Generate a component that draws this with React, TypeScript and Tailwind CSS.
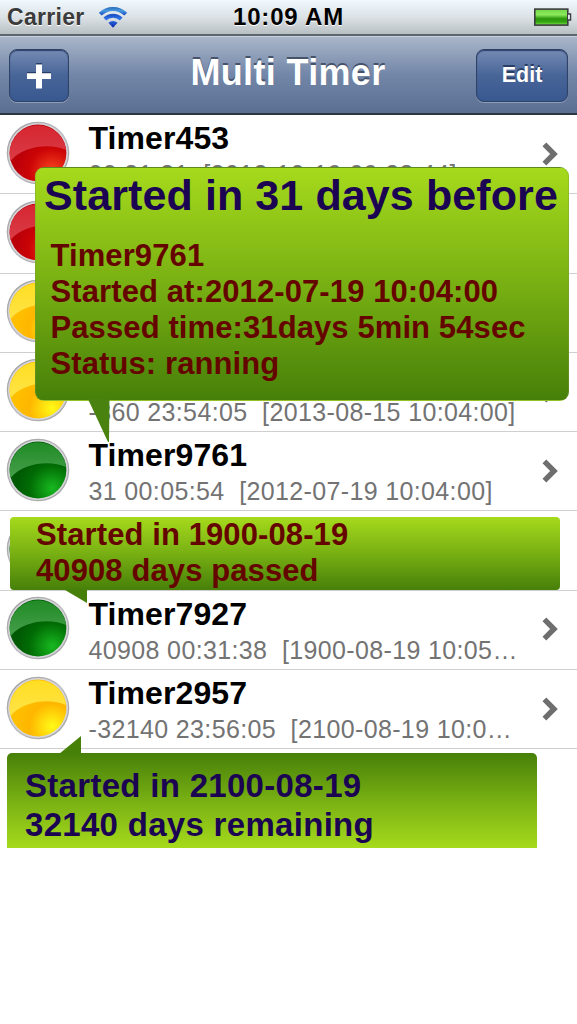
import { useId } from 'react';
import type { ReactNode } from 'react';

type Status = 'red' | 'yellow' | 'green';

interface Timer {
  id: number;
  name?: string;
  detail?: string;
  status: Status;
}

// rows without a name sit completely behind a callout
const timers: Timer[] = [
  { id: 1, name: 'Timer453', detail: '00:31:31  [2012-10-19 09:38:44]', status: 'red' },
  { id: 2, status: 'red' },
  { id: 3, status: 'yellow' },
  { id: 4, detail: '-360 23:54:05  [2013-08-15 10:04:00]', status: 'yellow' },
  { id: 5, name: 'Timer9761', detail: '31 00:05:54  [2012-07-19 10:04:00]', status: 'green' },
  { id: 6, status: 'green' },
  { id: 7, name: 'Timer7927', detail: '40908 00:31:38  [1900-08-19 10:05…', status: 'green' },
  { id: 8, name: 'Timer2957', detail: '-32140 23:56:05  [2100-08-19 10:0…', status: 'yellow' },
];

const orbColors = {
  red: { top: '#d31824', glow: '#f84420', base: '#cc0406', edge: '#bc0008', gloss: 0.16 },
  yellow: { top: '#ffdc14', glow: '#fffb18', base: '#ffb600', edge: '#ffbe00', gloss: 0.22 },
  green: { top: '#128418', glow: '#18b820', base: '#016c04', edge: '#005a04', gloss: 0.22 },
};

function Orb({ status }: { status: Status }) {
  const id = useId();
  const c = orbColors[status];
  return (
    <svg viewBox="0 0 64 64" className="h-16 w-16 shrink-0">
      <defs>
        <linearGradient id={`${id}rim`} x1="0" y1="0" x2="1" y2="1">
          <stop offset="0" stopColor="#98989a" />
          <stop offset="0.5" stopColor="#bcbcc0" />
          <stop offset="1" stopColor="#9c9c9e" />
        </linearGradient>
        <radialGradient id={`${id}fill`} cx="0.75" cy="0.82" r="0.62">
          <stop offset="0" stopColor={c.glow} />
          <stop offset="0.65" stopColor={c.base} />
          <stop offset="1" stopColor={c.edge} />
        </radialGradient>
        <linearGradient id={`${id}gloss`} x1="0" y1="0" x2="0" y2="1">
          <stop offset="0" stopColor="#fff" stopOpacity="0.06" />
          <stop offset="1" stopColor="#fff" stopOpacity={c.gloss} />
        </linearGradient>
      </defs>
      <circle cx="32" cy="32" r="31.3" fill={`url(#${id}rim)`} />
      <circle cx="32" cy="32" r="30" fill="#d6d6da" />
      <circle cx="32" cy="32" r="28.4" fill={`url(#${id}fill)`} />
      <path d="M4.6 40A28.4 28.4 0 1 1 60.2 29C46 22.5 18 23.5 4.6 40Z" fill={c.top} />
      <path d="M4.6 40A28.4 28.4 0 1 1 60.2 29C46 22.5 18 23.5 4.6 40Z" fill={`url(#${id}gloss)`} />
    </svg>
  );
}

function Chevron() {
  return (
    <svg viewBox="0 0 16 24" className="h-6 w-4 shrink-0">
      <path d="M2.4 2.4L12 12L2.4 21.6" fill="none" stroke="#6e6e6e" strokeWidth="5.4" />
    </svg>
  );
}

function TimerRow({ timer }: { timer: Timer }) {
  return (
    <li className="flex h-[79.3px] items-start border-b border-[#cfcfcf] pl-[5.5px]">
      <div className="mt-[5.5px]">
        <Orb status={timer.status} />
      </div>
      <div className="ml-[19px] w-[452px] pt-[5px] whitespace-pre">
        <div className="h-9 text-[32px] leading-9 font-bold tracking-[0.1px] text-black">{timer.name}</div>
        <div className="mt-[3px] h-[30px] text-[25px] leading-[30px] tracking-[0.36px] text-[#737373]">{timer.detail}</div>
      </div>
      <div className="mt-[26.5px] ml-px">
        <Chevron />
      </div>
    </li>
  );
}

function StatusBar() {
  return (
    <div className="relative flex h-9 items-center justify-center border-b-2 border-[#5d666d] bg-linear-to-b from-[#f0f9fe] via-[#dce2e6] to-[#b9c0c3]">
      <div className="absolute left-[7px] flex items-center">
        <span className="text-[23px] leading-8 font-bold tracking-[0.3px] text-[#3b3b3b] [text-shadow:0_1px_0_#fff]">Carrier</span>
        <svg viewBox="0 0 30 22" className="ml-[13px] h-[22px] w-[30px]">
          <defs>
            <linearGradient id="wifi" x1="0" y1="0" x2="0" y2="22" gradientUnits="userSpaceOnUse">
              <stop offset="0" stopColor="#1c5cab" />
              <stop offset="0.22" stopColor="#4a9ae0" />
              <stop offset="0.4" stopColor="#1a50c4" />
              <stop offset="0.6" stopColor="#3478ea" />
              <stop offset="1" stopColor="#0820a4" />
            </linearGradient>
          </defs>
          <g fill="none" stroke="url(#wifi)" strokeWidth="4">
            <path d="M2.2 8.2A18.2 18.2 0 0 1 27.8 8.2" />
            <path d="M6.8 13A12 12 0 0 1 23.2 13" />
          </g>
          <path d="M10.4 16.8A6.8 6.8 0 0 1 19.6 16.8L15 21.8Z" fill="url(#wifi)" />
        </svg>
      </div>
      <span className="text-[24px] leading-8 font-bold tracking-[0.8px] text-black [text-shadow:0_1px_0_#fff]">10:09 AM</span>
      <svg viewBox="0 0 38 19" className="absolute top-[7.5px] right-[5px] h-[19px] w-[38px]">
        <defs>
          <linearGradient id="battery" x1="0" y1="0" x2="0" y2="1">
            <stop offset="0" stopColor="#6fd648" />
            <stop offset="0.35" stopColor="#8cea5c" />
            <stop offset="0.6" stopColor="#2b960c" />
            <stop offset="0.8" stopColor="#34a412" />
            <stop offset="1" stopColor="#7be650" />
          </linearGradient>
        </defs>
        <rect x="0.8" y="1.1" width="33" height="16" fill="url(#battery)" stroke="#3c3c40" strokeWidth="1.6" />
        <path d="M34 6H36.6V12H34" fill="#dfe6ea" stroke="#3c3c40" strokeWidth="1.3" />
      </svg>
    </div>
  );
}

function NavButton({ className, children }: { className: string; children: ReactNode }) {
  return (
    <button
      className={`flex h-[53px] items-center justify-center rounded-[8px] border border-[#2f4268] bg-linear-to-b from-[#748ab3] via-[#486598] via-50% to-[#385890] text-white shadow-[inset_0_1px_1px_#2c3f66,0_1px_0_#8e9db8] ${className}`}
    >
      {children}
    </button>
  );
}

function NavBar() {
  return (
    <header className="flex h-[79px] items-start justify-between border-t border-b-2 border-t-[#c8d1de] border-b-[#2d3642] bg-linear-to-b from-[#aab6c9] via-[#7286a8] via-50% to-[#5b6f93] px-[9px] pt-3">
      <NavButton className="w-[60px]">
        <svg viewBox="0 0 26 26" className="h-[26px] w-[26px]">
          <path d="M10 0H16V9H25V15H16V24H10V15H1V9H10Z" fill="#2b3f66" />
          <path d="M10 1.6H16V10.2H25V16H16V25.6H10V16H1V10.2H10Z" fill="#fff" />
        </svg>
      </NavButton>
      <h1 className="mt-[2px] ml-[31px] text-[36px] leading-[44px] font-bold tracking-[0.35px] text-white [text-shadow:0_-2px_0_#46526a]">
        Multi Timer
      </h1>
      <NavButton className="w-[92px] text-[21.5px] font-bold [text-shadow:0_-2px_0_#2b3f66]">Edit</NavButton>
    </header>
  );
}

export default function App() {
  return (
    <div className="relative h-[1024px] w-[577px] overflow-hidden bg-white font-['Liberation_Sans',Arial,sans-serif]">
      <StatusBar />
      <NavBar />
      <ul>
        {timers.map((timer) => (
          <TimerRow key={timer.id} timer={timer} />
        ))}
      </ul>

      {/* Details of the running timer */}
      <div className="absolute top-[167px] left-[35px] h-[234px] w-[534px] rounded-[9px] border border-[#7a9a3c]/40 bg-linear-to-b from-[#a6da1c] via-[#78b013] to-[#478009] font-bold whitespace-nowrap">
        <div className="mt-[2px] ml-[8px] text-[43px] leading-[50px] tracking-[0.1px] text-[#1b0452]">Started in 31 days before</div>
        <div className="mt-[18px] ml-[14.5px] text-[31px] leading-9 tracking-[0.1px] text-[#650500]">
          <p>Timer9761</p>
          <p>Started at:2012-07-19 10:04:00</p>
          <p>Passed time:31days 5min 54sec</p>
          <p>Status: ranning</p>
        </div>
        <svg viewBox="0 0 22 43" className="absolute top-[231px] left-[52px] h-[43px] w-[22px]">
          <path d="M0 0H21.5L21 43H20Z" fill="#4a8210" />
        </svg>
      </div>

      <div className="absolute top-[517px] left-[10px] h-[73px] w-[550px] rounded-[4px] bg-linear-to-b from-[#a6da1c] via-[#78b013] to-[#478009] font-bold whitespace-nowrap">
        <div className="ml-[26px] text-[31px] leading-9 tracking-[0.1px] text-[#650500]">
          <p>Started in 1900-08-19</p>
          <p>40908 days passed</p>
        </div>
        <svg viewBox="0 0 22 13" className="absolute top-[73px] left-[55px] h-[13px] w-[22px]">
          <path d="M0 0H22V13Z" fill="#478009" />
        </svg>
      </div>

      <div className="absolute top-[753px] left-[7px] h-[95px] w-[530px] rounded-t-[5px] bg-linear-to-b from-[#478009] via-[#78b013] to-[#a6da1c] font-bold whitespace-nowrap">
        <svg viewBox="0 0 22 18" className="absolute -top-[17px] left-[52px] h-[18px] w-[22px]">
          <path d="M0 18H22V0Z" fill="#478009" />
        </svg>
        <div className="mt-[13px] ml-[18px] text-[33px] leading-[39px] tracking-[0.3px] text-[#1b0452]">
          <p>Started in 2100-08-19</p>
          <p>32140 days remaining</p>
        </div>
      </div>
    </div>
  );
}
